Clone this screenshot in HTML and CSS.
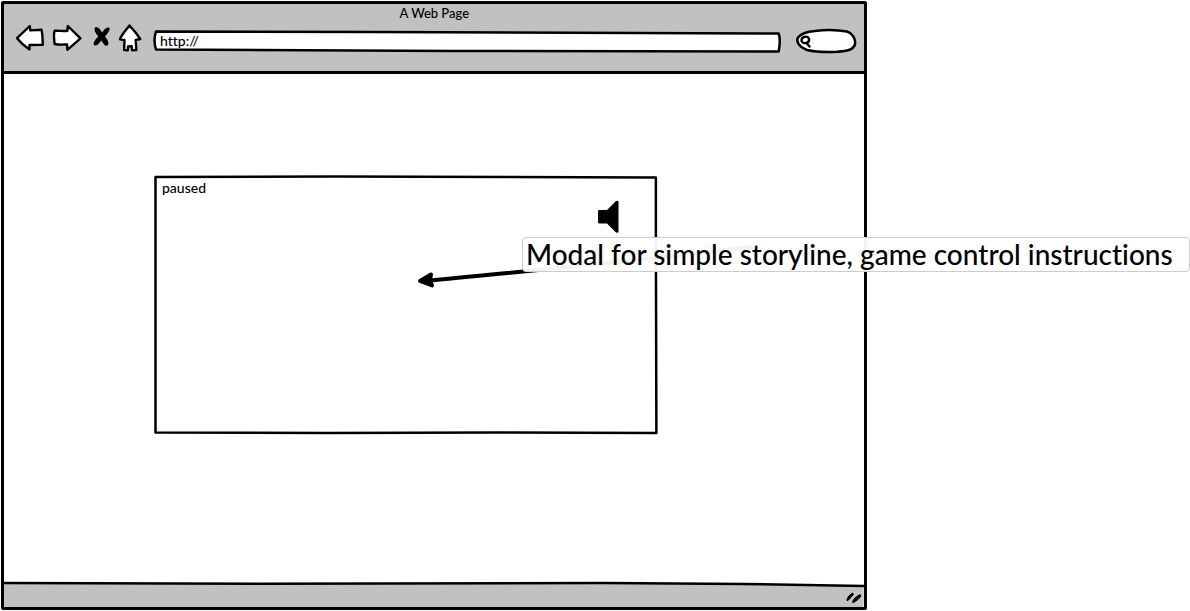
FILE: index.html
```html
<!DOCTYPE html>
<html lang="en">
<head>
<meta charset="utf-8">
<meta name="viewport" content="width=device-width, initial-scale=1">
<title>A Web Page</title>
<link rel="stylesheet" href="styles.css">
</head>
<body>
<div class="browser">
  <header class="chrome">
    <h1 class="title">A Web Page</h1>
    <div class="toolbar">
      <button class="tool" type="button" aria-label="Back">
        <svg class="icon outline" width="36" height="34" viewBox="12 22 36 34"><path d="M17 37.2 29.8 25l.4 4.4 11.3-.7c1.2 4.800 1 9.600 1.300 15.100l-13.300.2v4.400C25 45.500 20.500 41.500 17 37.200Z"/></svg>
      </button>
      <button class="tool" type="button" aria-label="Forward">
        <svg class="icon outline" width="36" height="34" viewBox="48 22 36 34"><path d="M80.500 37.300 67.800 25l-.4 4.800c-4 .7-8.400-.4-12.700 0-1.500 3.500-.4 9-.1 13.200 4.100 1 8.200.6 12.400.4l.4 5.500Z"/></svg>
      </button>
      <button class="tool" type="button" aria-label="Stop">
        <svg class="icon" width="32" height="34" viewBox="84 22 32 34"><path d="M95 26.500c2.500-1.500 4.800 1.500 7 5 2-2.500 4-5.800 7-5 2.400 1.800-2 6.200-4 9 2 2.700 4.500 6 3 8.500-3 2.300-5-2-6.700-4.500-2 2.300-4 5.800-7 4.800-2.200-2.200 1.700-6.300 3.900-8.800-2.200-3-4.800-6.800-3.200-9Z"/></svg>
      </button>
      <button class="tool" type="button" aria-label="Home">
        <svg class="icon outline" width="28" height="34" viewBox="116 22 28 34"><path d="M129.500 24.500c4 4.300 7.500 8.500 10.800 13.500l-4.600 1 .6 10-4.300.2-.3-4-3.600.2-.3 3.900-3.700-.3.400-10-4.500-.7c2-5.500 6-9 9.500-13.800Z"/></svg>
      </button>
      <div class="field address">
        <svg class="sketch" viewBox="0 0 628 24" preserveAspectRatio="none"><path d="M4 2.500 220 3l404 1.500c2 5.500 1 12.500 0 18L300 22 4 20.500C2 14 2 8 4 2.500Z"/></svg>
        <input class="entry" type="text" value="http://" aria-label="Address">
      </div>
      <div class="field search">
        <svg class="sketch" viewBox="0 0 62 26" preserveAspectRatio="none"><path d="M20 3C30 1.500 44 2 52 3.500c5 1.500 9 7 8 13-2 6-9 6.500-18 7.300-10 .4-22 .2-30-1.800C3 18 1 13 3 9.500 6 5.500 12 3.500 20 3Z"/></svg>
        <svg class="lens" width="12" height="14" viewBox="798 35 12 14"><path d="M800.500 41c.5-4 6.500-4.500 7.500-1 .8 4-5.500 5.500-7.200 2.500Zm5 3 3 3.500"/></svg>
        <input class="entry" type="search" aria-label="Search">
      </div>
    </div>
  </header>

  <main class="page">
    <section class="modal">
      <svg class="sketch" viewBox="0 0 505 258" preserveAspectRatio="none"><path d="M1.500 1 180 .5l323 1L503 60l.5 197-160-.5-170 .5L1.500 256.500 1.500 120Z"/></svg>
      <div class="modal-body">
        <span>paused</span>
        <button class="tool sound" type="button" aria-label="Sound">
          <svg class="icon" width="23" height="34" viewBox="597 200 23 34"><path d="M599 210h8l8.500-8.500c1-1 3-1 3 .5v29.500c0 1.500-2 1.500-3 .5l-8.500-8.500h-8q-1-.2-1-1.500v-10.500q0-1.300 1-1.500Z"/></svg>
        </button>
      </div>
      <div class="callout">
        <svg class="arrow" width="344" height="56" viewBox="415 234 344 56"><path class="shaft" d="M426 281C520 271.500 640 261 752 247"/><path class="head" d="m420 281 11-6.500-1 5.500 2 5.500Z"/></svg>
        <p class="note">Modal for simple storyline, game control instructions</p>
      </div>
    </section>
  </main>

  <footer class="status">
    <svg class="sketch" viewBox="0 0 860 26" preserveAspectRatio="none"><path class="shade" d="M0 2 600 2 860 5V26H0Z"/><path d="M-2 2 260 2.700 600 2 740 3 862 5"/></svg>
    <svg class="grip" width="18" height="16" viewBox="846 590 18 16"><path d="M848 600.500q1-4 5.500-6.500l1 1.500-5.500 6q-1.500.5-1-1Zm5.500 2q2-4.500 7.500-7l1 1.500q-3 4.500-7.500 6.500-1.500 0-1-1Z"/></svg>
  </footer>
</div>
</body>
</html>
```
FILE: styles.css
```css
* {
  box-sizing: border-box;
}

body {
  margin: 0;
  background: #fff;
  color: #000;
  font: 500 14px/16px Lato, "Open Sans", sans-serif;
  font-variant-ligatures: none;
  overflow-x: hidden;
}

.browser {
  display: flex;
  flex-direction: column;
  width: calc(73% - 3px);
  min-height: calc(100vh - 2px);
  margin: 1px;
  border: 3px solid #000;
  border-radius: 2px;
}

.chrome {
  padding: 0 7px 14px 8px;
  background: #c1c1c1;
  border-bottom: 3px solid #000;
}

.title {
  margin: 0;
  padding-bottom: 1px;
  font-size: 13px;
  font-weight: 500;
  line-height: 18px;
  text-align: center;
}

.toolbar {
  display: flex;
  align-items: center;
}

.tool {
  display: block;
  flex: none;
  padding: 0;
  border: 0;
  background: none;
}

.icon {
  display: block;
}

.outline {
  fill: #fff;
  stroke: #000;
  stroke-width: 2.4;
  stroke-linejoin: round;
}

.field {
  display: grid;
  align-items: center;
}

.field > *,
.modal > .sketch,
.modal-body,
.status > * {
  grid-area: 1 / 1;
}

.address {
  flex: 1;
  height: 24px;
  margin: 2px 12px 0 8px;
}

.search {
  width: 62px;
  height: 26px;
  margin: 2px 0 0;
}

.sketch {
  display: block;
  width: 100%;
  height: 100%;
  min-height: 0;
  overflow: visible;
}

.sketch path {
  fill: #fff;
  stroke: #000;
  stroke-width: 2.5;
  stroke-linejoin: round;
  vector-effect: non-scaling-stroke;
}

.entry {
  width: 100%;
  min-width: 0;
  height: 18px;
  padding: 0 8px 2px;
  border: 0;
  outline: 0;
  background: none;
  color: inherit;
  font: inherit;
}

.search .entry {
  padding-left: 18px;
}

.lens {
  margin-left: 4px;
  fill: none;
  stroke: #000;
  stroke-width: 2.4;
  stroke-linecap: round;
}

.page {
  flex: 1;
  padding: 102px 0 40px 150px;
}

.modal {
  position: relative;
  display: grid;
  width: 71%;
  min-height: 258px;
}

.modal-body {
  display: flex;
  justify-content: space-between;
  padding: 4px 38px 8px 8px;
}

.sound {
  align-self: flex-start;
  margin-top: 20px;
}

.callout {
  position: absolute;
  top: 61px;
  left: 261px;
  display: grid;
}

.arrow {
  grid-area: 1 / 1;
  margin-top: -3px;
}

.shaft {
  fill: none;
  stroke: #000;
  stroke-width: 4;
}

.head {
  stroke: #000;
  stroke-width: 4;
  stroke-linejoin: round;
}

.note {
  grid-area: 1 / 1;
  align-self: start;
  margin: 0 0 0 107px;
  padding: 0 16px 1px 3px;
  border: 1px solid #ccc;
  border-radius: 4px;
  background: rgba(255, 255, 255, 0.95);
  font-size: 28px;
  line-height: 32px;
  white-space: nowrap;
}

.status {
  display: grid;
  height: 26px;
  align-items: center;
  overflow: hidden;
}

.status .sketch path {
  fill: none;
}

.status .sketch .shade {
  fill: #c1c1c1;
  stroke: none;
}

.grip {
  justify-self: end;
  margin: 6px 1px 0 0;
  stroke: #000;
}
```
